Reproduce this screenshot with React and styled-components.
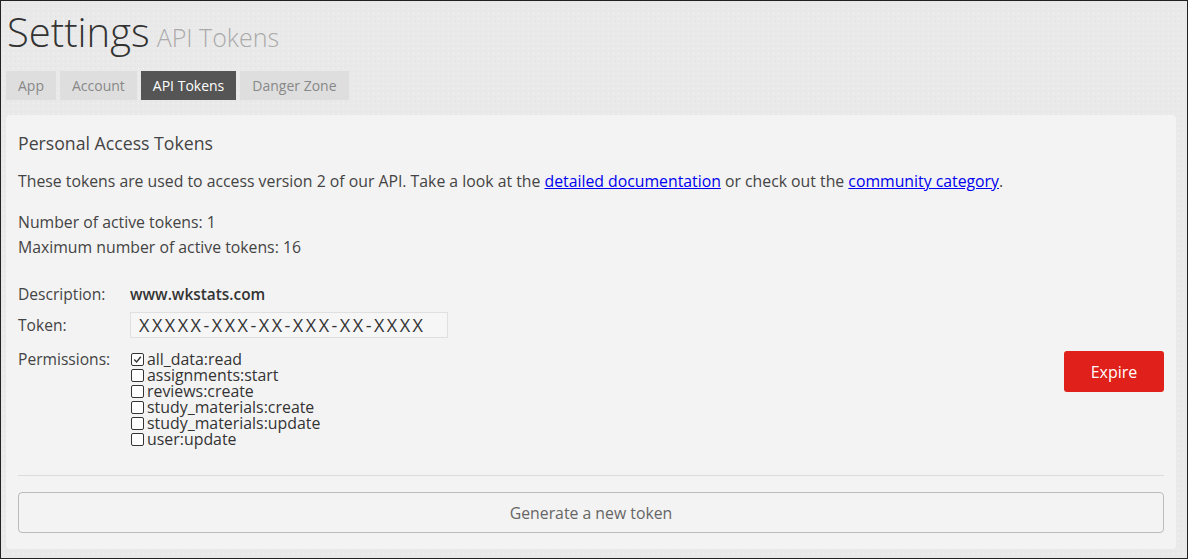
import React from 'react';
import styled, { createGlobalStyle } from 'styled-components';

const GlobalStyle = createGlobalStyle`
  html, body {
    margin: 0;
    padding: 0;
  }
  body {
    font-family: "Open Sans", "Noto Sans", sans-serif;
    color: #444;
  }
`;

const Page = styled.div`
  box-sizing: border-box;
  width: 1188px;
  height: 559px;
  border: 1px solid #222;
  background-color: #e9e9e9;
  background-image:
    radial-gradient(rgba(255, 255, 255, 0.45) 0.6px, transparent 0.8px),
    radial-gradient(rgba(0, 0, 0, 0.025) 0.6px, transparent 0.8px);
  background-size: 5px 5px, 5px 5px;
  background-position: 0 0, 2px 3px;
  padding: 0 11px 0 5px;
`;

const Header = styled.h1`
  margin: 0;
  padding-left: 1px;
  font-size: 40px;
  font-weight: 300;
  line-height: 62px;
  height: 62px;
  color: #333;
`;

const SubTitle = styled.small`
  font-size: 25px;
  line-height: 1;
  color: #aaa;
  margin-left: 7px;
`;

const Tabs = styled.nav`
  display: flex;
  gap: 4px;
  margin-top: 8px;
`;

const Tab = styled.span`
  display: block;
  height: 29px;
  line-height: 29px;
  padding: 0 12px;
  font-size: 14px;
  background: ${(p) => (p.active ? '#555' : '#dedede')};
  color: ${(p) => (p.active ? '#fff' : '#888')};
`;

const Panel = styled.section`
  margin-top: 15px;
  background: #f3f3f3;
  border-radius: 4px;
  padding: 16px 12px 16px 12px;
`;

const Heading = styled.h2`
  margin: 0;
  font-size: 17.7px;
  font-weight: 400;
  line-height: 24px;
  color: #444;
`;

const Text = styled.p`
  margin: ${(p) => p.margin || '0'};
  font-size: 15.8px;
  line-height: 25px;
  color: #444;

  a {
    color: #0000ee;
  }
`;

const TokenGrid = styled.div`
  display: grid;
  grid-template-columns: 112px 1fr auto;
  margin-top: 22px;
  font-size: 15.6px;
  color: #444;
`;

const Label = styled.div`
  line-height: ${(p) => p.lh || '25px'};
  margin-top: ${(p) => p.mt || '0'};
`;

const Value = styled.div`
  line-height: 25px;
  font-weight: 600;
  font-size: 15.4px;
  color: #333;
  grid-column: span 2;
`;

const TokenBox = styled.div`
  grid-column: span 2;
  justify-self: start;
  box-sizing: border-box;
  width: 318px;
  height: 26px;
  margin-top: 5px;
  padding-left: 8px;
  background: #f6f6f6;
  border: 1px solid #e0e0e0;
  font-size: 18px;
  line-height: 24px;
  letter-spacing: 2.5px;
  color: #333;
`;

const TokenLabel = styled(Label)`
  margin-top: 5px;
  line-height: 26px;
`;

const PermList = styled.ul`
  list-style: none;
  margin: 13px 0 0;
  padding: 0;
`;

const Perm = styled.li`
  display: flex;
  align-items: center;
  gap: 3px;
  height: 16px;
  line-height: 16px;
  font-size: 15.9px;
  color: #333;
`;

const Box = styled.span`
  box-sizing: border-box;
  display: flex;
  align-items: center;
  justify-content: center;
  width: 13px;
  height: 13px;
  margin-left: 1px;
  border: 1.5px solid #333;
  border-radius: 2px;
  background: #fff;
`;

const ExpireButton = styled.button`
  align-self: start;
  margin-top: 13px;
  width: 100px;
  height: 41px;
  border: none;
  border-radius: 3px;
  background: #e0201a;
  color: #fff;
  font-family: inherit;
  font-size: 16px;
`;

const Divider = styled.hr`
  margin: 28px 0 16px;
  border: none;
  border-top: 1px solid #dcdcdc;
`;

const GenerateButton = styled.button`
  display: block;
  width: 100%;
  height: 41px;
  border: 1px solid #bbb;
  border-radius: 4px;
  background: #f3f3f3;
  color: #666;
  font-family: inherit;
  font-size: 15.8px;
`;

const permissions = [
  { name: 'all_data:read', checked: true },
  { name: 'assignments:start' },
  { name: 'reviews:create' },
  { name: 'study_materials:create' },
  { name: 'study_materials:update' },
  { name: 'user:update' },
];

const Checkbox = ({ checked }) => (
  <Box>
    {checked && (
      <svg width="9" height="9" viewBox="0 0 9 9">
        <path d="M1.2 4.6 L3.6 7 L7.8 1.8" fill="none" stroke="#333" strokeWidth="1.4" />
      </svg>
    )}
  </Box>
);

const App = () => (
  <Page>
    <GlobalStyle />
    <Header>
      Settings
      <SubTitle>API Tokens</SubTitle>
    </Header>
    <Tabs>
      <Tab>App</Tab>
      <Tab>Account</Tab>
      <Tab active>API Tokens</Tab>
      <Tab>Danger Zone</Tab>
    </Tabs>
    <Panel>
      <Heading>Personal Access Tokens</Heading>
      <Text margin="14px 0 0">
        These tokens are used to access version 2 of our API. Take a look at the{' '}
        <a href="#docs">detailed documentation</a> or check out the{' '}
        <a href="#community">community category</a>.
      </Text>
      <Text margin="16px 0 0">Number of active tokens: 1</Text>
      <Text>Maximum number of active tokens: 16</Text>
      <TokenGrid>
        <Label>Description:</Label>
        <Value>www.wkstats.com</Value>
        <TokenLabel>Token:</TokenLabel>
        <TokenBox>XXXXX-XXX-XX-XXX-XX-XXXX</TokenBox>
        <Label lh="16px" mt="13px">Permissions:</Label>
        <PermList>
          {permissions.map((p) => (
            <Perm key={p.name}>
              <Checkbox checked={p.checked} />
              {p.name}
            </Perm>
          ))}
        </PermList>
        <ExpireButton>Expire</ExpireButton>
      </TokenGrid>
      <Divider />
      <GenerateButton>Generate a new token</GenerateButton>
    </Panel>
  </Page>
);

export default App;
